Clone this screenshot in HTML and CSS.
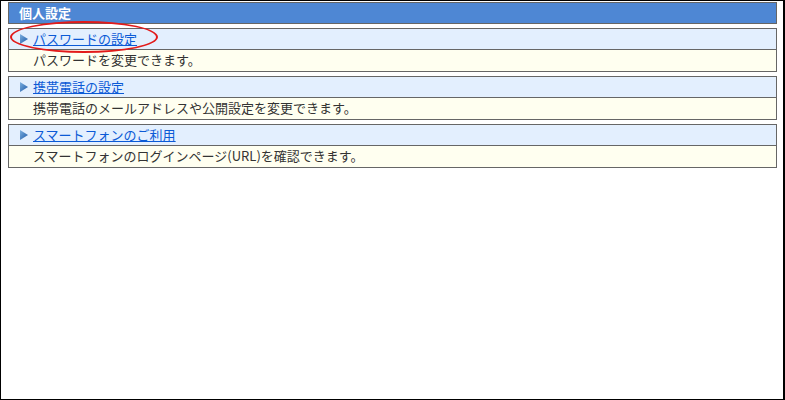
FILE: index.html
```html
<!DOCTYPE html>
<html lang="ja">
<head>
<meta charset="utf-8">
<link rel="stylesheet" href="styles.css">
</head>
<body>
<div class="frame">
  <div class="title">個人設定</div>
  <div class="box">
    <div class="head"><svg class="arrow" width="8" height="10" viewBox="0 0 8 10"><defs><linearGradient id="g1" x1="0" y1="0" x2="1" y2="1"><stop offset="0" stop-color="#7db0e0"/><stop offset="1" stop-color="#1a57a6"/></linearGradient></defs><polygon points="0,0 8,5 0,10" fill="url(#g1)"/></svg><a href="#">パスワードの設定</a></div>
    <div class="desc">パスワードを変更できます。</div>
  </div>
  <div class="box">
    <div class="head"><svg class="arrow" width="8" height="10" viewBox="0 0 8 10"><polygon points="0,0 8,5 0,10" fill="url(#g1)"/></svg><a href="#">携帯電話の設定</a></div>
    <div class="desc">携帯電話のメールアドレスや公開設定を変更できます。</div>
  </div>
  <div class="box">
    <div class="head"><svg class="arrow" width="8" height="10" viewBox="0 0 8 10"><polygon points="0,0 8,5 0,10" fill="url(#g1)"/></svg><a href="#">スマートフォンのご利用</a></div>
    <div class="desc">スマートフォンのログインページ(URL)を確認できます。</div>
  </div>
  <span class="circle"></span>
</div>
</body>
</html>
```
FILE: styles.css
```css
* { box-sizing: border-box; }
html, body { margin: 0; padding: 0; background: #fff; }
.frame {
  position: relative;
  width: 785px;
  height: 400px;
  border: 1px solid #000;
  border-right-width: 2px;
  padding: 1px 6px 0 7px;
  font-family: "Noto Sans CJK JP", "Noto Sans", sans-serif;
  font-size: 13px;
  color: #333;
}
.title {
  height: 22px;
  background: #4e87d4;
  border: 1px solid #666;
  color: #fff;
  font-weight: bold;
  line-height: 20px;
  padding-left: 10px;
  margin-bottom: 4px;
}
.box {
  border: 1px solid #666;
  margin-bottom: 4px;
}
.head {
  background: #e3effe;
  border-bottom: 1px solid #666;
  display: flex;
  align-items: center;
  padding-left: 11px;
  height: 21px;
}
.arrow { margin-right: 5px; flex: none; }
.head a { color: #0b5ad6; text-decoration: underline; line-height: 20px; }
.desc {
  height: 21px;
  background: #fffff0;
  line-height: 20px;
  padding-left: 24px;
}
.circle {
  position: absolute;
  left: 9px;
  top: 20px;
  width: 148px;
  height: 32px;
  border: 2px solid #e21a1a;
  border-radius: 50%;
}
```
